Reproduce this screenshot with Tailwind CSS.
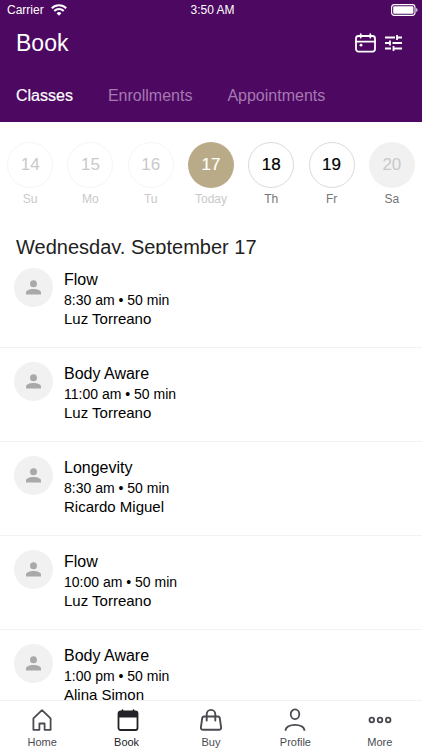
<!DOCTYPE html>
<html lang="en">
<head>
  <meta charset="UTF-8" />
  <meta name="viewport" content="width=device-width, initial-scale=1.0"/>
  <title>Book</title>
  <script src="https://cdn.jsdelivr.net/npm/@tailwindcss/browser@4"></script>
</head>
<body class="flex flex-col h-screen overflow-hidden bg-white text-black font-['Liberation_Sans',Arial,sans-serif]">

  <!-- Header -->
  <header class="shrink-0 bg-[#4d0861] text-white">
    <!-- Status bar -->
    <div class="grid grid-cols-3 items-center h-5 pl-[7px] pr-1 text-xs">
      <div class="flex items-center gap-[7px]">
        <span>Carrier</span>
        <svg class="w-4 h-3" viewBox="0 0 16 12" fill="none" stroke="currentColor" stroke-width="2">
          <path d="M.8 4.3a10.3 10.3 0 0 1 14.4 0M3.3 7a6.7 6.7 0 0 1 9.4 0"/>
          <path d="M8 11.8 5.6 9.3a3.4 3.4 0 0 1 4.8 0z" fill="currentColor" stroke="none"/>
        </svg>
      </div>
      <span class="text-center">3:50 AM</span>
      <svg class="justify-self-end w-[27px] h-3" viewBox="0 0 27 12" fill="none">
        <rect x=".6" y=".6" width="23.4" height="10.8" rx="2.8" stroke="currentColor" stroke-width="1.1"/>
        <rect x="2.2" y="2.2" width="20.2" height="7.6" rx="1.2" fill="currentColor"/>
        <path d="M25.3 4c1.6.5 1.6 3.5 0 4z" fill="currentColor"/>
      </svg>
    </div>

    <!-- Title and actions -->
    <div class="flex items-center justify-between h-[46px] pl-4 pr-5">
      <h1 class="text-[23px] leading-7">Book</h1>
      <div class="flex items-center gap-[9px]">
        <button aria-label="Calendar">
          <svg class="block w-[21px] h-5" viewBox="0 0 21 20" fill="none" stroke="currentColor" stroke-width="1.8" stroke-linecap="round">
            <rect x="1" y="3" width="19" height="15.6" rx="2.5"/>
            <path d="M1 8.6h19M5.7 1.2v3.4M15.3 1.2v3.4"/>
            <circle cx="6" cy="12.2" r="1.4" fill="currentColor" stroke="none"/>
          </svg>
        </button>
        <button aria-label="Filters">
          <svg class="block w-[17px] h-[18px]" viewBox="0 0 17 18" fill="none" stroke="currentColor" stroke-width="1.8">
            <path d="M0 3.5h10M12 3.5h5M12 1v5M0 9h5M5 6.5v5M7.5 9H17M0 14.5h6M8.5 12v5M8.500 14.5H17"/>
          </svg>
        </button>
      </div>
    </div>

    <!-- Tabs -->
    <nav class="flex gap-[35px] h-14 pt-5 pl-4 leading-5">
      <a href="#" class="h-5 [-webkit-text-stroke:0.2px]">Classes</a>
      <a href="#" class="h-5 text-[#a679b3]">Enrollments</a>
      <a href="#" class="h-5 text-[#a679b3]">Appointments</a>
    </nav>
  </header>

  <!-- Week strip -->
  <div class="shrink-0 grid grid-cols-7 pt-5 text-center text-xs leading-4 text-[#c9c9c9]">
    <button class="flex flex-col items-center gap-[3px]">
      <span class="flex items-center justify-center size-[46px] rounded-full border border-[#f5f5f5] text-[17px]">14</span>Su
    </button>
    <button class="flex flex-col items-center gap-[3px]">
      <span class="flex items-center justify-center size-[46px] rounded-full border border-[#f5f5f5] text-[17px]">15</span>Mo
    </button>
    <button class="flex flex-col items-center gap-[3px]">
      <span class="flex items-center justify-center size-[46px] rounded-full border border-[#f5f5f5] text-[17px]">16</span>Tu
    </button>
    <button class="flex flex-col items-center gap-[3px]">
      <span class="flex items-center justify-center size-[46px] rounded-full bg-[#b9aa88] text-white text-[17px] [-webkit-text-stroke:0.2px]">17</span>Today
    </button>
    <button class="flex flex-col items-center gap-[3px] text-[#757575]">
      <span class="flex items-center justify-center size-[46px] rounded-full border border-[#dadada] text-black text-[17px] [-webkit-text-stroke:0.2px]">18</span>Th
    </button>
    <button class="flex flex-col items-center gap-[3px] text-[#757575]">
      <span class="flex items-center justify-center size-[46px] rounded-full border border-[#dadada] text-black text-[17px] [-webkit-text-stroke:0.2px]">19</span>Fr
    </button>
    <button class="flex flex-col items-center gap-[3px] text-[#757575]">
      <span class="flex items-center justify-center size-[46px] rounded-full bg-[#f1f1f1] text-[#c9c9c9] text-[17px]">20</span>Sa
    </button>
  </div>

  <!-- Day heading, its lower edge runs under the list -->
  <div class="shrink-0 h-[47px] pt-7 pl-4 overflow-hidden">
    <h2 class="text-xl leading-6 text-[#222]">Wednesday, September 17</h2>
  </div>

  <!-- Class list -->
  <main class="flex-1 min-h-0 overflow-hidden">
    <ul id="classList"></ul>
  </main>

  <!-- Bottom nav -->
  <nav class="shrink-0 grid grid-cols-5 h-[50px] pt-[7px] border-t border-[#f2f2f2] bg-white text-[11px] leading-4 text-[#4a4b50]">
    <a href="#" class="flex flex-col items-center gap-0.5">
      <svg class="w-6 h-6" viewBox="0 0 24 24" fill="none" stroke="currentColor" stroke-width="1.8" stroke-linejoin="round">
        <path d="M3.4 10.4 12 2.2l8.600 8.200v11.400h-6v-6.300H9.400v6.300h-6z"/>
      </svg>
      Home
    </a>
    <a href="#" class="flex flex-col items-center gap-0.5 text-[#222328]">
      <svg class="w-6 h-6" viewBox="0 0 24 24" fill="none" stroke="currentColor" stroke-width="1.8" stroke-linecap="round">
        <rect x="3.500" y="3.500" width="19" height="18.500" rx="2"/>
        <path d="M3.500 3.500h19v6h-19z" fill="currentColor" stroke="none"/>
        <path d="M7.500 2.200v2M18.500 2.200v2"/>
      </svg>
      Book
    </a>
    <a href="#" class="flex flex-col items-center gap-0.5">
      <svg class="w-6 h-6" viewBox="0 0 24 24" fill="none" stroke="currentColor" stroke-width="1.900" stroke-linecap="round" stroke-linejoin="round">
        <path d="M5 8.500h14q1.400 0 1.700 1.200l1.400 9.600q.2 2.500-2.200 2.500H4.100q-2.400 0-2.200-2.500l1.400-9.600q.3-1.200 1.700-1.200z"/>
        <path d="M7.700 12.500V6.200a4.300 4.300 0 0 1 8.600 0v6.300"/>
      </svg>
      Buy
    </a>
    <a href="#" class="flex flex-col items-center gap-0.5">
      <svg class="w-6 h-6" viewBox="0 0 24 24" fill="none" stroke="currentColor" stroke-width="1.8">
        <ellipse cx="12" cy="6.300" rx="4.300" ry="4.900"/>
        <path d="M2.500 22.800c0-8 19-8 19 0"/>
      </svg>
      Profile
    </a>
    <a href="#" class="flex flex-col items-center gap-0.5">
      <svg class="w-6 h-6" viewBox="0 0 24 24" fill="none" stroke="currentColor" stroke-width="1.8">
        <circle cx="3.8" cy="12" r="2.3"/>
        <circle cx="12" cy="12" r="2.3"/>
        <circle cx="20.2" cy="12" r="2.3"/>
      </svg>
      More
    </a>
  </nav>

  <script>
    const classes = [
      { name: 'Flow', time: '8:30 am', teacher: 'Luz Torreano' },
      { name: 'Body Aware', time: '11:00 am', teacher: 'Luz Torreano' },
      { name: 'Longevity', time: '8:30 am', teacher: 'Ricardo Miguel' },
      { name: 'Flow', time: '10:00 am', teacher: 'Luz Torreano' },
      { name: 'Body Aware', time: '1:00 pm', teacher: 'Alina Simon' }
    ];

    document.getElementById('classList').innerHTML = classes.map(c => `
      <li class="flex gap-[11px] h-[94px] pl-3.5 pt-3.5 border-b border-[#f3f3f3]">
        <span class="flex items-center justify-center size-[39px] rounded-full bg-[#f1f1f1] text-[#a9a9a9]">
          <svg class="w-[15px] h-[15px]" viewBox="0 0 15 15" fill="currentColor">
            <circle cx="7.5" cy="3.7" r="3.5"/>
            <path d="M0 14.500v-1.800c0-4.800 15-4.800 15 0v1.800z"/>
          </svg>
        </span>
        <div>
          <h3 class="text-base leading-5 pt-0.5">${c.name}</h3>
          <p class="text-sm leading-5">${c.time} • 50 min</p>
          <p class="text-[15px] leading-[18px]">${c.teacher}</p>
        </div>
      </li>`).join('');
  </script>
</body>
</html>
